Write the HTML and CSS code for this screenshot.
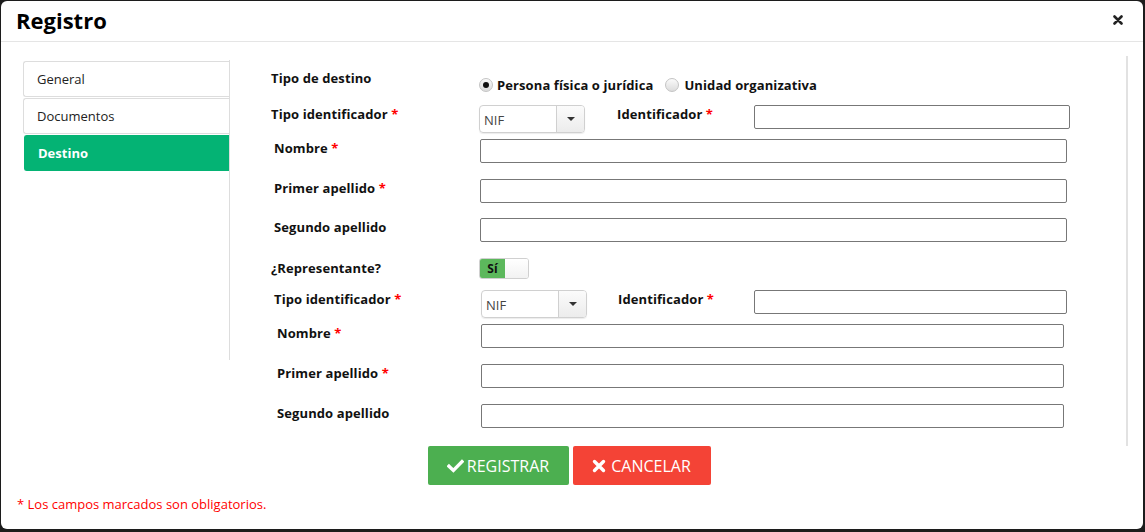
FILE: index.html
```html
<!DOCTYPE html>
<html lang="es">
<head>
<meta charset="utf-8">
<title>Registro</title>
<link rel="stylesheet" href="styles.css">
</head>
<body>
<div class="modal">
  <div class="modal-header">
    <h4 class="title">Registro</h4>
    <button class="close" aria-label="Cerrar">
      <svg width="10" height="10" viewBox="0 0 10 10"><path d="M1.5 1.5 L8.5 8.5 M8.5 1.5 L1.5 8.5" stroke="#222" stroke-width="2.6" stroke-linecap="round"/></svg>
    </button>
  </div>
  <div class="modal-body">
    <ul class="nav">
      <li class="nav-item">General</li>
      <li class="nav-item">Documentos</li>
      <li class="nav-item active">Destino</li>
    </ul>
    <div class="form">
      <div class="row r1">
        <label class="lbl w208">Tipo de destino</label>
        <div class="radios">
          <span class="radio checked"></span><span class="radio-text">Persona física o jurídica</span>
          <span class="radio gap"></span><span class="radio-text">Unidad organizativa</span>
        </div>
      </div>
      <div class="row tight">
        <label class="lbl w208">Tipo identificador <span class="req">*</span></label>
        <div class="select"><span class="sel-val">NIF</span><span class="sel-btn"><span class="caret"></span></span></div>
        <label class="lbl lbl2 w137">Identificador <span class="req">*</span></label>
        <input class="input w316" type="text">
      </div>
      <div class="row ind3">
        <label class="lbl w206">Nombre <span class="req">*</span></label>
        <input class="input w587" type="text">
      </div>
      <div class="row ind3 m15">
        <label class="lbl w206">Primer apellido <span class="req">*</span></label>
        <input class="input w587" type="text">
      </div>
      <div class="row ind3">
        <label class="lbl w206">Segundo apellido</label>
        <input class="input w587" type="text">
      </div>
      <div class="row m11">
        <label class="lbl w208 lbl-toggle">¿Representante?</label>
        <div class="toggle"><span class="toggle-on">Sí</span><span class="toggle-handle"></span></div>
      </div>
      <div class="row ind3 tight">
        <label class="lbl w207">Tipo identificador <span class="req">*</span></label>
        <div class="select"><span class="sel-val">NIF</span><span class="sel-btn"><span class="caret"></span></span></div>
        <label class="lbl lbl2 w136">Identificador <span class="req">*</span></label>
        <input class="input w313" type="text">
      </div>
      <div class="row ind6">
        <label class="lbl w204">Nombre <span class="req">*</span></label>
        <input class="input w583" type="text">
      </div>
      <div class="row ind6">
        <label class="lbl w204">Primer apellido <span class="req">*</span></label>
        <input class="input w583" type="text">
      </div>
      <div class="row ind6">
        <label class="lbl w204">Segundo apellido</label>
        <input class="input w583" type="text">
      </div>
    </div>
  </div>
  <div class="actions">
    <button class="btn btn-green">
      <svg width="17" height="14" viewBox="0 0 17 14"><path d="M2 7.2 L6.4 11.4 L15 2.6" fill="none" stroke="#fff" stroke-width="3.4" stroke-linejoin="miter" stroke-linecap="square"/></svg>
      REGISTRAR
    </button>
    <button class="btn btn-red">
      <svg width="14" height="14" viewBox="0 0 14 14"><path d="M2.5 2.5 L11.5 11.5 M11.5 2.5 L2.5 11.5" stroke="#fff" stroke-width="3.4" stroke-linecap="round"/></svg>
      CANCELAR
    </button>
  </div>
  <p class="note">* Los campos marcados son obligatorios.</p>
</div>
</body>
</html>
```

FILE: styles.css
```css
* { box-sizing: border-box; }
html, body { margin: 0; padding: 0; }
body {
  background: #1c1c1c;
  font-family: "Open Sans", "Liberation Sans", sans-serif;
  font-size: 13px;
  color: #222;
  width: 1145px;
  height: 532px;
  overflow: hidden;
  padding: 1px 2px 0 1px;
}
.modal {
  background: #fff;
  width: 1142px;
  height: 528px;
  border-radius: 6px;
}
.modal-header {
  height: 41px;
  border-bottom: 1px solid #e5e5e5;
  display: flex;
  align-items: center;
  justify-content: space-between;
  padding: 0 20px 3px 15px;
}
.title {
  margin: 0;
  font-size: 22px;
  font-weight: 700;
  color: #000;
  line-height: 30px;
}
.close {
  border: 0;
  background: none;
  padding: 0;
  margin-top: 0;
  display: flex;
}
.modal-body {
  margin: 14px 15px 0 22px;
  height: 390px;
  border-right: 2px solid #e2e2e2;
  display: flex;
  align-items: flex-start;
}
.nav {
  list-style: none;
  margin: 4px 0 0 0;
  padding: 1px 0 0 0;
  width: 207px;
  height: 300px;
  border-right: 1px solid #ddd;
  display: flex;
  flex-direction: column;
  gap: 1px;
}
.nav-item {
  height: 36px;
  border: 1px solid #ddd;
  border-right: 0;
  border-radius: 3px 0 0 3px;
  padding-left: 13px;
  display: flex;
  align-items: center;
  color: #222;
  font-size: 13px;
}
.nav-item.active {
  background: #04b374;
  border-color: #04b374;
  color: #fff;
  font-weight: 700;
  margin-left: 1px;
  padding-left: 13px;
}
.form {
  margin-left: 41px;
  padding-top: 13px;
  display: flex;
  flex-direction: column;
}
.row {
  display: flex;
  align-items: flex-start;
  margin-bottom: 16px;
}
.row.tight { margin-bottom: 6px; }
.row.m15 { margin-bottom: 15px; }
.row.m11 { margin-bottom: 11px; }
.row.r1 { margin-bottom: 11px; }
.ind3 { padding-left: 3px; }
.ind6 { padding-left: 6px; }
.lbl {
  font-weight: 700;
  line-height: 18px;
  color: #111;
  flex: none;
  letter-spacing: 0.1px;
}
.lbl-toggle { margin-top: 1px; }
.lbl2 { margin-left: 32px; }
.ind3 .lbl2 { margin-left: 31px; }
.w208 { width: 208px; }
.w207 { width: 207px; }
.w206 { width: 206px; }
.w204 { width: 204px; }
.w137 { width: 137px; }
.w136 { width: 136px; }
.req { color: #f00; }
.input {
  height: 24px;
  border: 1px solid #777;
  border-radius: 2px;
  padding: 0 6px;
  font: inherit;
  flex: none;
}
.w316 { width: 316px; }
.w313 { width: 313px; }
.w587 { width: 587px; }
.w583 { width: 583px; }
.radios {
  display: flex;
  align-items: center;
  margin-top: 7px;
  height: 18px;
}
.radio {
  width: 14px;
  height: 14px;
  border-radius: 50%;
  border: 1px solid #c4c4c4;
  background: linear-gradient(#fafafa, #dcdcdc);
  display: inline-flex;
  align-items: center;
  justify-content: center;
  margin-right: 4px;
}
.radio.checked::after {
  content: "";
  width: 6px;
  height: 6px;
  border-radius: 50%;
  background: #111;
}
.radio.gap { margin-left: 12px; margin-right: 5px; }
.radio-text { font-weight: 700; color: #111; letter-spacing: 0.1px; }
.select {
  width: 106px;
  height: 28px;
  border: 1px solid #d0d0d0;
  border-radius: 4px;
  display: flex;
  box-shadow: 0 1px 1px rgba(0,0,0,0.08);
  flex: none;
}
.sel-val {
  flex: 1;
  padding-left: 4px;
  display: flex;
  align-items: center;
  color: #444;
  font-size: 13px;
  padding-top: 2px;
}
.sel-btn {
  width: 28px;
  border-left: 1px solid #d0d0d0;
  background: linear-gradient(#fbfbfb, #ececec);
  border-radius: 0 3px 3px 0;
  display: flex;
  align-items: center;
  justify-content: center;
}
.caret {
  width: 0;
  height: 0;
  border-left: 4px solid transparent;
  border-right: 4px solid transparent;
  border-top: 4px solid #333;
}
.toggle {
  width: 50px;
  height: 21px;
  border: 1px solid #d0d0d0;
  border-radius: 3px;
  display: flex;
  overflow: hidden;
}
.toggle-on {
  width: 25px;
  background: #5cb85c;
  color: #111;
  font-weight: 700;
  font-size: 12px;
  display: flex;
  align-items: center;
  justify-content: center;
}
.toggle-handle {
  flex: 1;
  background: linear-gradient(#ffffff, #f2f2f2);
}
.actions {
  display: flex;
  justify-content: center;
  gap: 4px;
  padding-right: 6px;
}
.btn {
  height: 39px;
  border: 0;
  border-radius: 2px;
  color: #fff;
  font-family: "Open Sans", "Liberation Sans", sans-serif;
  font-size: 16px;
  display: flex;
  align-items: center;
  gap: 3px;
  padding: 0;
  justify-content: center;
}
.btn-green { background: #4caf50; width: 141px; }
.btn-red { background: #f44336; width: 138px; gap: 5px; }
.note {
  margin: 10px 0 0 16px;
  color: #f00;
  font-size: 13px;
  line-height: 18px;
}
```
